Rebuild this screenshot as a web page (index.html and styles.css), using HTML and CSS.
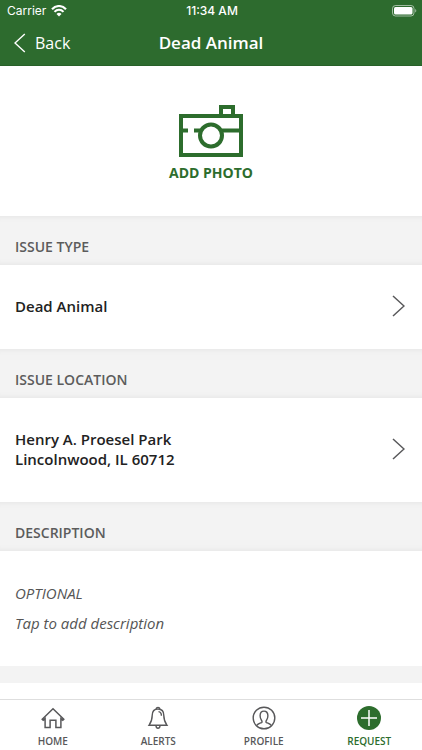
FILE: index.html
```html
<!DOCTYPE html>
<html lang="en">
<head>
<meta charset="utf-8">
<meta name="viewport" content="width=device-width, initial-scale=1">
<title>Dead Animal</title>
<link rel="stylesheet" href="styles.css">
</head>
<body>
<div class="app">
  <header class="header">
    <div class="status">
      <div class="carrier">
        <span>Carrier</span>
        <svg width="16" height="12" viewBox="0 0 16 12" fill="none" stroke="#fff" stroke-width="2.1">
          <path d="M1 4.3C5-.1 11-.1 15 4.3M3.5 6.9c2.6-2.8 6.400-2.800 9 0"/>
          <path d="M5.500 8.900c1.400-1.500 3.600-1.500 5 0L8 11.600Z" fill="#fff" stroke="none"/>
        </svg>
      </div>
      <time class="clock">11:34 AM</time>
      <svg class="battery" width="25" height="12" viewBox="0 0 25 12">
        <rect x=".5" y=".5" width="21.500" height="10.500" rx="3" fill="none" stroke="#fff" stroke-opacity=".55"/>
        <rect x="2" y="2" width="18.500" height="7.500" rx="1.500" fill="#fff"/>
        <path d="M23.200 4v3.600c1.500-.6 1.500-3 0-3.600Z" fill="#fff" fill-opacity=".55"/>
      </svg>
    </div>
    <div class="nav">
      <button class="back" type="button">
        <svg width="12" height="20" viewBox="0 0 12 20" fill="none" stroke="#fff" stroke-width="1.4"><path d="M10.800 1 1 10l9.800 9"/></svg>
        <span>Back</span>
      </button>
      <h1 class="title">Dead Animal</h1>
    </div>
  </header>

  <main class="content">
    <button class="photo" type="button">
      <svg width="64" height="52" viewBox="0 0 64 52" fill="none" stroke="#2d6d2d" stroke-width="4">
        <path d="M2 11h60v39H2Z"/>
        <path d="M42 10V2h12v8" />
        <path d="M3 25.500h6M15 25.500h6M43 25.500h18"/>
        <circle cx="32" cy="30.500" r="11"/>
      </svg>
      <span>ADD PHOTO</span>
    </button>

    <h2 class="band">ISSUE TYPE</h2>
    <button class="row" type="button">
      <span>Dead Animal</span>
      <svg width="13" height="22" viewBox="0 0 13 22" fill="none" stroke="#58585a" stroke-width="1.5"><path d="M1 1l11 10L1 21"/></svg>
    </button>

    <h2 class="band">ISSUE LOCATION</h2>
    <button class="row" type="button">
      <span>Henry A. Proesel Park<br>Lincolnwood, IL 60712</span>
      <svg width="13" height="22" viewBox="0 0 13 22" fill="none" stroke="#58585a" stroke-width="1.5"><path d="M1 1l11 10L1 21"/></svg>
    </button>

    <h2 class="band">DESCRIPTION</h2>
    <div class="description">
      <label for="description">OPTIONAL</label>
      <textarea id="description" rows="1" placeholder="Tap to add description"></textarea>
    </div>
    <div class="gap"></div>
  </main>

  <nav class="tabs">
    <a class="tab" href="#home">
      <svg width="24" height="24" viewBox="0 0 24 24" fill="none" stroke="#58585a" stroke-width="1.500">
        <path d="M1.200 13.300 12 2.800l10.800 10.500-1 1-1.900-1.700V21.500h-5v-7.300H9.100v7.300h-5v-8.900l-1.900 1.700Z"/>
      </svg>
      <span>HOME</span>
    </a>
    <a class="tab" href="#alerts">
      <svg width="24" height="24" viewBox="0 0 24 24" fill="none" stroke="#58585a" stroke-width="1.400">
        <path d="M12 3c-4 0-5.800 3-5.800 6.500 0 5-1.200 7-3.200 9.800h18c-2-2.800-3.200-4.800-3.200-9.800C17.800 6 16 3 12 3Z"/>
        <path d="M10.300 3.200c-.1-2.400 3.500-2.400 3.400 0M10 19.500c0 3.600 4 3.600 4 0M12.500 5.600c2.200.2 2.900 1.800 2.900 4.200"/>
      </svg>
      <span>ALERTS</span>
    </a>
    <a class="tab" href="#profile">
      <svg width="24" height="24" viewBox="0 0 24 24" fill="none" stroke="#58585a" stroke-width="1.400">
        <circle cx="12" cy="12" r="10.800"/>
        <path d="M4.500 19.700c1.400-2 3.300-2.400 5-3.100.8-.4.600-1.400.1-2.100-1.200-1.600-1.500-3.100-1.500-4.700 0-6.200 7.800-6.200 7.800 0 0 1.600-.3 3.100-1.500 4.700-.5.700-.7 1.700.1 2.100 1.700.7 3.600 1.100 5 3.100"/>
      </svg>
      <span>PROFILE</span>
    </a>
    <a class="tab active" href="#request" aria-current="page">
      <svg width="24" height="24" viewBox="0 0 24 24" fill="none" stroke="#fff" stroke-width="1.500">
        <circle cx="12" cy="12" r="12" fill="#2d6d2d" stroke="none"/>
        <path d="M12 4v16M4 12h16"/>
      </svg>
      <span>REQUEST</span>
    </a>
  </nav>
</div>
</body>
</html>
```
FILE: styles.css
```css
* {
  box-sizing: border-box;
}

body {
  margin: 0;
  font-family: "Open Sans", "Noto Sans", sans-serif;
  color: #222;
  background: #fff;
}

button {
  margin: 0;
  border: 0;
  background: none;
  font: inherit;
  color: inherit;
  cursor: pointer;
}

svg {
  display: block;
  flex: none;
}

.app {
  display: flex;
  flex-direction: column;
  height: 100vh;
}

/* Header */
.header {
  flex: none;
  color: #fff;
  background: #2d6b2e;
  border-bottom: 1px solid #286028;
}

.status {
  display: grid;
  grid-template-columns: 1fr auto 1fr;
  align-items: center;
  height: 21px;
  padding: 0 5px 0 7px;
  font-family: Inter, "Liberation Sans", sans-serif;
  font-size: 12px;
  line-height: 20px;
}

.carrier {
  display: flex;
  align-items: center;
  gap: 5px;
}

.clock {
  font-weight: 500;
}

.battery {
  justify-self: end;
}

.nav {
  display: grid;
  grid-template-columns: 1fr auto 1fr;
  align-items: center;
  height: 44px;
}

.back {
  display: flex;
  align-items: center;
  justify-self: start;
  gap: 9px;
  padding: 0 14px;
  font-size: 16px;
  line-height: 24px;
}

.title {
  margin: 0;
  font-size: 17px;
  line-height: 24px;
  font-weight: 600;
}

/* Scrolling content */
.content {
  display: flex;
  flex: 1;
  flex-direction: column;
  min-height: 0;
  overflow-y: auto;
  scrollbar-width: none;
}

.content > * {
  flex: none;
}

.photo {
  display: flex;
  flex-direction: column;
  align-items: center;
  gap: 6px;
  padding: 39px 0 33px;
  font-size: 14px;
  line-height: 20px;
  font-weight: 700;
  color: #2d6d2d;
}

.band {
  margin: 0;
  padding: 21px 15px 8px;
  font-size: 14px;
  line-height: 20px;
  font-weight: 600;
  color: #5c5c5c;
  background: #f3f3f3;
  box-shadow: inset 0 6px 4px -4px #e9e9e9, inset 0 -6px 4px -4px #e9e9e9;
}

.row {
  display: flex;
  align-items: center;
  justify-content: space-between;
  padding: 31px 17px 33px 15px;
  font-size: 15px;
  line-height: 20px;
  font-weight: 600;
  text-align: left;
}

.row svg {
  margin: -1px 0;
}

.description {
  display: flex;
  flex-direction: column;
  gap: 9px;
  padding: 32px 15px;
  font-size: 15px;
  line-height: 21px;
  font-style: italic;
  color: #555;
}

.description textarea {
  width: 100%;
  height: 21px;
  padding: 0;
  border: 0;
  outline: 0;
  resize: none;
  overflow: hidden;
  background: none;
  font: inherit;
  color: inherit;
}

.description textarea::placeholder {
  color: #555;
  opacity: 1;
}

.gap {
  height: 17px;
  background: #f3f3f3;
}

/* Tab bar */
.tabs {
  display: grid;
  grid-template-columns: repeat(4, 1fr);
  flex: none;
  border-top: 1px solid #dedede;
}

.tab {
  display: flex;
  flex-direction: column;
  align-items: center;
  gap: 4px;
  padding: 6px 0 2px;
  font-size: 10px;
  line-height: 14px;
  font-weight: 600;
  color: #58585a;
  text-decoration: none;
}

.tab.active {
  color: #2d6d2d;
}
```
